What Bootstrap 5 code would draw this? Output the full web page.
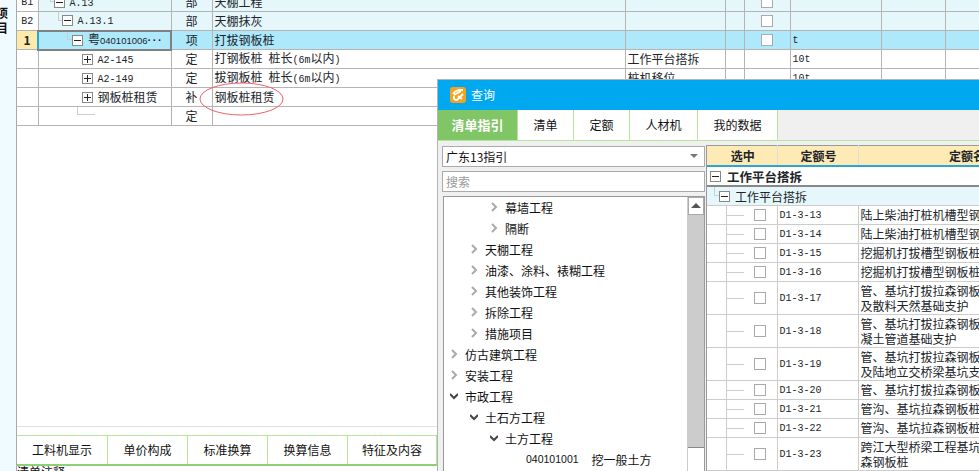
<!DOCTYPE html>
<html lang="zh"><head><meta charset="utf-8"><title>查询</title>
<link href="https://cdn.jsdelivr.net/npm/bootstrap@5.3.0/dist/css/bootstrap.min.css" rel="stylesheet">
<style>
html,body{height:471px;overflow:hidden}
body{position:relative;background:#fff;color:#111;font:12px/1.2 "Noto Sans CJK SC","Liberation Sans",sans-serif}
.ltn{font-family:"Liberation Mono",monospace;font-size:10px}
.node>.ltn{padding-top:3px}
.cell-ltn{padding-top:2px;display:block}
.ltn-s{font-family:"Liberation Sans",sans-serif;font-size:9.5px}
.ltn-t{font-family:"Liberation Sans",sans-serif;font-size:10.5px}
.dots{letter-spacing:1.5px;font-weight:700;font-size:11px;font-family:"Liberation Sans",sans-serif}
.shell{height:471px}
.side{width:17px;background:#f0fbff;border-right:1px solid #aaa;overflow:hidden;font-weight:700;line-height:15px}
.side-txt{margin:5px 0 0 -4px;width:12px}
.grid-wrap{height:427px;overflow:hidden;border-bottom:1px solid #e0e0e0}
table.main-grid{table-layout:fixed;width:962px;margin:-8px 0 0;border-collapse:collapse;--bs-table-bg:transparent}
table.main-grid td{height:19px;padding:0 0 0 2px;border:1px solid #b4b4b4;white-space:nowrap;overflow:hidden;vertical-align:middle;line-height:14px}
.r-b td{background:#e6f7fc}
.r-s td{background:#aee8fb}
table.main-grid td.hd{text-align:center;padding:0;background:#fff;border-left:0}
table.main-grid td.hd-s{background:#fde9a9;font-weight:700}
table.main-grid td.c-t{text-align:center;padding:0}
table.main-grid td.foc{border:2px solid #808080;border-left:2px solid #2aa5d8}
.node{display:flex;align-items:center;position:relative;height:14px}
.tbox{flex:none;display:block;width:11px;height:11px;border:1px solid #888;background:#fff;position:relative;margin-right:5px}
.tbox::before{content:"";position:absolute;left:1px;right:1px;top:4px;height:1px;background:#222}
.tbox.plus::after{content:"";position:absolute;top:1px;bottom:1px;left:4px;width:1px;background:#222}
.lv1{padding-left:13px}.lv2{padding-left:21px}.lv3{padding-left:31px}.lv4{padding-left:41px}
.conn{position:absolute;top:-6px;height:13px;border-left:1px solid #ccc;border-bottom:1px solid #ccc}
.lv1 .conn{left:9px;width:4px}.lv2 .conn{left:17px;width:4px}.lv3 .conn{left:26px;width:5px}.lv4 .conn{left:36px;width:5px}
.stub{position:absolute;left:36px;top:-8px;height:14px;width:18px;border-left:1px solid #ccc;border-bottom:1px solid #ccc}
.cb{display:block;width:12px;height:12px;border:1px solid #aaa;background:#fff;margin:0 0 0 14px}
.gap-s{height:8px}
.bot-tabs{height:31px;border-top:1px solid #b3e69b;border-bottom:2px solid #8fcf75}
.bot-tabs .nav-link{height:28px;color:#111;padding:0;line-height:28px;text-align:center;border-right:1px solid #b3e69b;font-size:12px;border-radius:0}
.tw1{width:91px}.tw2{width:80px}.tw3{width:89px}
.note{line-height:12px;height:5px;overflow:hidden}
.ring{position:absolute;left:199px;top:82px;pointer-events:none}
.dlg{position:absolute;left:437px;top:79px;right:0;bottom:0;background:#f0f0f0;border:1px solid #b4b4b4;border-width:1px 0 0 1px;overflow:hidden}
.dlg-hd{height:32px;background:#00a8f0;color:#fff;padding-left:12px;gap:5px}
.dlg-tabs{height:31px;background:#f0f0f0;border-bottom:1px solid #b3e69b}
.dlg-tabs .nav-link{height:30px;line-height:30px;padding:0;color:#111;background:#fff;text-align:center;border-right:1px solid #b3e69b;border-radius:0}
.dlg-tabs .nav-link.active{background:#80c566;color:#fff;font-weight:700;font-size:13px}
.w1{width:80px}.w2{width:56px}.w3{width:56px}.w4{width:68px}.w5{width:80px}
.pane-l{width:268px;padding:5px 0 0 4px}
.fld{height:21px;padding:0 3px;border:1px solid #aaa;border-radius:0;font-size:12px;line-height:19px;background:#fff;color:#111;width:263px;margin-bottom:4px}
.fld::placeholder{color:#999}
.caret-d{width:0;height:0;border:4px solid transparent;border-top:4px solid #777;border-bottom:0;margin-right:3px}
.tree-box{width:262px;height:300px;border:1px solid #999;background:#fff;margin:3px 0 0 1px;overflow:hidden;position:relative}
.tree{margin:0;padding:0;list-style:none}
.tree li{height:21px;line-height:21px;display:flex;align-items:center;white-space:nowrap}
.chev{flex:none;width:8px;height:10px;margin-right:7px}
.t0{padding-left:6px}.t1{padding-left:26px}.t2{padding-left:46px}.t3{padding-left:82px}
.code-gap{margin-right:13px}
.sbar{position:absolute;top:0;right:0;width:17px;height:100%;background:#fff;border-left:1px solid #ccc}
.sbar-up{height:18px;background:#fff;border:1px solid #aaa;display:flex;align-items:center;justify-content:center}
.sbar-up i{width:0;height:0;border:5px solid transparent;border-bottom:5px solid #555;border-top:0}
.sbar-tr{height:233px;background:#ccc;border-bottom:1px solid #888}
.pane-r{flex:1;min-width:0;overflow:hidden;margin-top:4px;border-left:1px solid #999}
table.q-grid{table-layout:fixed;width:379px;margin:0;border-collapse:collapse;background:#fff;--bs-table-bg:transparent}
table.q-grid th,table.q-grid td{padding:0 0 0 2px;border:0;border-bottom:1px solid #ccc;border-right:1px solid #ccc;line-height:15px;white-space:nowrap;overflow:hidden;font-weight:400;vertical-align:middle}
table.q-grid th{height:21px;background:#fdeab5;text-align:center;font-weight:700;border-bottom:2px solid #2aa5d8;border-top:1px solid #999;border-right:1px solid #ddd}
table.q-grid td{height:19px}
table.q-grid tr.dbl td{height:33px}
table.q-grid tr.grp td{font-weight:700;border-right:0;border-bottom:2px solid #888;height:20px;font-size:12.5px}
table.q-grid tr.sub td{background:#e6f7fc;border-right:0;height:19px}
table.q-grid td.chk{padding:0;position:relative}
.dash{position:absolute;left:20px;top:50%;width:17px;height:1px;background:#ccc}
.vln{position:absolute;left:19px;top:0;bottom:0;width:1px;background:#ccc}
.cb2{display:block;width:12px;height:12px;border:1px solid #aaa;background:#fff;margin-left:47px;position:relative}
.grp-box{margin-left:1px;margin-right:6px}
.sub-node{padding-left:10px}
.sub-node .conn{left:5px;width:5px;border-color:#c4d4dc}
</style></head><body>
<svg width="0" height="0" class="position-absolute"><defs>
<symbol id="c-r" viewBox="0 0 8 10"><polyline points="2,1 6,5 2,9" fill="none" stroke="#aaa" stroke-width="2"/></symbol>
<symbol id="c-d" viewBox="0 0 8 10"><polyline points="0,3 4,7 8,3" fill="none" stroke="#444" stroke-width="2"/></symbol>
</defs></svg>
<div class="shell d-flex">
<aside class="side flex-shrink-0"><div class="side-txt">项<br>目</div></aside>
<main class="flex-grow-1 d-flex flex-column overflow-hidden">
<div class="grid-wrap">
<table class="table main-grid"><colgroup><col style="width:21px"><col style="width:133px"><col style="width:41px"><col style="width:413px"><col style="width:100px"><col style="width:19px"><col style="width:46px"><col style="width:91px"><col style="width:64px"><col style="width:34px"></colgroup>
<tbody>
<tr class="r-b"><td class="hd"><span class="ltn cell-ltn">B1</span></td><td><div class="node lv1"><i class="conn"></i><span class="tbox"></span><span class="ltn">A.13</span></div></td><td class="c-t">部</td><td>天棚工程</td><td></td><td></td><td><span class="cb"></span></td><td></td><td></td><td></td></tr>
<tr class="r-b"><td class="hd"><span class="ltn cell-ltn">B2</span></td><td><div class="node lv2"><i class="conn"></i><span class="tbox"></span><span class="ltn">A.13.1</span></div></td><td class="c-t">部</td><td>天棚抹灰</td><td></td><td></td><td><span class="cb"></span></td><td></td><td></td><td></td></tr>
<tr class="r-s"><td class="hd hd-s">1</td><td class="foc"><div class="node lv3"><i class="conn"></i><span class="tbox"></span><span>粤<span class="ltn-s">040101006</span><span class="dots">···</span></span></div></td><td class="c-t">项</td><td>打拔钢板桩</td><td></td><td></td><td><span class="cb"></span></td><td><span class="ltn cell-ltn">t</span></td><td></td><td></td></tr>
<tr><td class="hd"></td><td><div class="node lv4"><span class="tbox plus"></span><span class="ltn">A2-145</span></div></td><td class="c-t">定</td><td>打钢板桩&ensp;桩长<span class="ltn">(6m</span>以内<span class="ltn">)</span></td><td>工作平台搭拆</td><td></td><td></td><td><span class="ltn cell-ltn">10t</span></td><td></td><td></td></tr>
<tr><td class="hd"></td><td><div class="node lv4"><span class="tbox plus"></span><span class="ltn">A2-149</span></div></td><td class="c-t">定</td><td>拔钢板桩&ensp;桩长<span class="ltn">(6m</span>以内<span class="ltn">)</span></td><td>桩机移位</td><td></td><td></td><td><span class="ltn cell-ltn">10t</span></td><td></td><td></td></tr>
<tr><td class="hd"></td><td><div class="node lv4"><span class="tbox plus"></span><span>钢板桩租赁</span></div></td><td class="c-t">补</td><td>钢板桩租赁</td><td></td><td></td><td></td><td></td><td></td><td></td></tr>
<tr><td class="hd"></td><td><div class="node"><i class="stub"></i></div></td><td class="c-t">定</td><td></td><td></td><td></td><td></td><td></td><td></td><td></td></tr>
</tbody></table>
</div>
<div class="gap-s"></div>
<ul class="nav bot-tabs flex-nowrap">
<li class="nav-item"><a class="nav-link tw1" href="#">工料机显示</a></li>
<li class="nav-item"><a class="nav-link tw2" href="#">单价构成</a></li>
<li class="nav-item"><a class="nav-link tw2" href="#">标准换算</a></li>
<li class="nav-item"><a class="nav-link tw2" href="#">换算信息</a></li>
<li class="nav-item"><a class="nav-link tw3" href="#">特征及内容</a></li>
</ul>
<div class="note">清单注释</div>
</main>
</div>
<svg class="ring" width="85" height="34" viewBox="0 0 85 34"><ellipse cx="42.5" cy="17" rx="41.5" ry="16" fill="none" stroke="#f0606a"/></svg>

<section class="dlg d-flex flex-column">
<header class="dlg-hd d-flex align-items-center">
<svg width="16" height="16" viewBox="0 0 16 16"><rect width="16" height="16" rx="3" fill="#f5a31f"/><path d="M3 7 Q6 2 13 3 M4 8 L11 4 M4 9 Q3 13 7 13 L13 7 M8 9 L12 12" fill="none" stroke="#fff" stroke-width="1.8"/></svg>
<span>查询</span></header>
<ul class="nav dlg-tabs flex-nowrap">
<li class="nav-item"><a class="nav-link active w1" href="#">清单指引</a></li>
<li class="nav-item"><a class="nav-link w2" href="#">清单</a></li>
<li class="nav-item"><a class="nav-link w3" href="#">定额</a></li>
<li class="nav-item"><a class="nav-link w4" href="#">人材机</a></li>
<li class="nav-item"><a class="nav-link w5" href="#">我的数据</a></li>
</ul>
<div class="d-flex flex-grow-1 overflow-hidden">
<div class="pane-l flex-shrink-0">
<div class="form-control fld d-flex align-items-center justify-content-between"><span>广东13指引</span><i class="caret-d"></i></div>
<input class="form-control fld" placeholder="搜索" readonly>
<div class="tree-box">
<ul class="tree">
<li class="t2"><svg class="chev"><use href="#c-r"/></svg>幕墙工程</li>
<li class="t2"><svg class="chev"><use href="#c-r"/></svg>隔断</li>
<li class="t1"><svg class="chev"><use href="#c-r"/></svg>天棚工程</li>
<li class="t1"><svg class="chev"><use href="#c-r"/></svg>油漆、涂料、裱糊工程</li>
<li class="t1"><svg class="chev"><use href="#c-r"/></svg>其他装饰工程</li>
<li class="t1"><svg class="chev"><use href="#c-r"/></svg>拆除工程</li>
<li class="t1"><svg class="chev"><use href="#c-r"/></svg>措施项目</li>
<li class="t0"><svg class="chev"><use href="#c-r"/></svg>仿古建筑工程</li>
<li class="t0"><svg class="chev"><use href="#c-r"/></svg>安装工程</li>
<li class="t0"><svg class="chev"><use href="#c-d"/></svg>市政工程</li>
<li class="t1"><svg class="chev"><use href="#c-d"/></svg>土石方工程</li>
<li class="t2"><svg class="chev"><use href="#c-d"/></svg>土方工程</li>
<li class="t3"><span class="ltn-t code-gap">040101001</span>挖一般土方</li>
</ul>
<div class="sbar"><div class="sbar-up"><i></i></div><div class="sbar-tr"></div></div>
</div>
</div>
<div class="pane-r">
<table class="table q-grid"><colgroup><col style="width:70px"><col style="width:81px"><col style="width:228px"></colgroup>
<thead><tr><th>选中</th><th>定额号</th><th>定额名称</th></tr></thead>
<tbody>
<tr class="grp"><td colspan="3"><div class="node"><span class="tbox grp-box"></span>工作平台搭拆</div></td></tr>
<tr class="sub"><td colspan="3"><div class="node sub-node"><i class="conn"></i><span class="tbox"></span>工作平台搭拆</div></td></tr>
<tr><td class="chk"><i class="vln"></i><i class="dash"></i><span class="cb2"></span></td><td><span class="ltn cell-ltn">D1-3-13</span></td><td>陆上柴油打桩机槽型钢板桩</td></tr>
<tr><td class="chk"><i class="vln"></i><i class="dash"></i><span class="cb2"></span></td><td><span class="ltn cell-ltn">D1-3-14</span></td><td>陆上柴油打桩机槽型钢板桩</td></tr>
<tr><td class="chk"><i class="vln"></i><i class="dash"></i><span class="cb2"></span></td><td><span class="ltn cell-ltn">D1-3-15</span></td><td>挖掘机打拔槽型钢板桩</td></tr>
<tr><td class="chk"><i class="vln"></i><i class="dash"></i><span class="cb2"></span></td><td><span class="ltn cell-ltn">D1-3-16</span></td><td>挖掘机打拔槽型钢板桩</td></tr>
<tr class="dbl"><td class="chk"><i class="vln"></i><i class="dash"></i><span class="cb2"></span></td><td><span class="ltn cell-ltn">D1-3-17</span></td><td>管、基坑打拔拉森钢板桩<br>及散料天然基础支护</td></tr>
<tr class="dbl"><td class="chk"><i class="vln"></i><i class="dash"></i><span class="cb2"></span></td><td><span class="ltn cell-ltn">D1-3-18</span></td><td>管、基坑打拔拉森钢板桩<br>凝土管道基础支护</td></tr>
<tr class="dbl"><td class="chk"><i class="vln"></i><i class="dash"></i><span class="cb2"></span></td><td><span class="ltn cell-ltn">D1-3-19</span></td><td>管、基坑打拔拉森钢板桩<br>及陆地立交桥梁基坑支护</td></tr>
<tr><td class="chk"><i class="vln"></i><i class="dash"></i><span class="cb2"></span></td><td><span class="ltn cell-ltn">D1-3-20</span></td><td>管、基坑打拔拉森钢板桩</td></tr>
<tr><td class="chk"><i class="vln"></i><i class="dash"></i><span class="cb2"></span></td><td><span class="ltn cell-ltn">D1-3-21</span></td><td>管沟、基坑拉森钢板桩</td></tr>
<tr><td class="chk"><i class="vln"></i><i class="dash"></i><span class="cb2"></span></td><td><span class="ltn cell-ltn">D1-3-22</span></td><td>管沟、基坑拉森钢板桩</td></tr>
<tr class="dbl"><td class="chk"><i class="vln"></i><i class="dash"></i><span class="cb2"></span></td><td><span class="ltn cell-ltn">D1-3-23</span></td><td>跨江大型桥梁工程基坑拉<br>森钢板桩</td></tr>
</tbody></table>
</div>
</div>
</section>
</body></html>
